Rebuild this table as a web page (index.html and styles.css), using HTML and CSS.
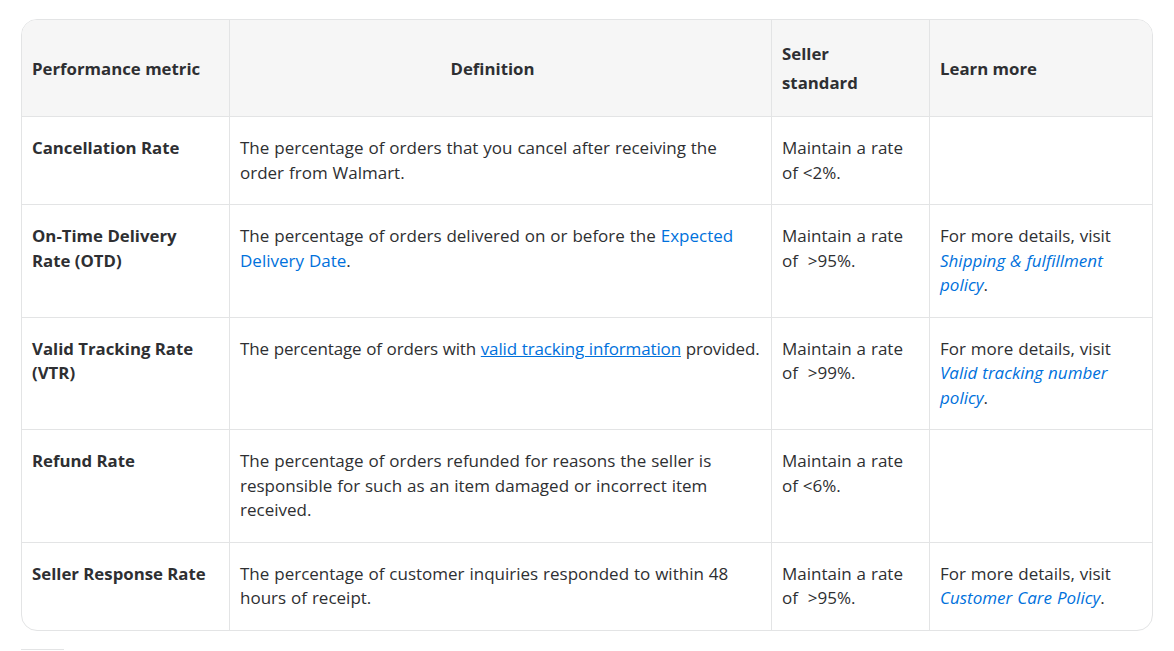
FILE: index.html
```html
<!DOCTYPE html>
<html lang="en">
<head>
<meta charset="utf-8">
<title>Seller performance standards</title>
<link rel="stylesheet" href="styles.css">
</head>
<body>
<div class="page">
  <div class="table-wrap">
    <table class="metrics">
      <colgroup>
        <col class="c1"><col class="c2"><col class="c3"><col class="c4">
      </colgroup>
      <thead>
        <tr>
          <th>Performance metric</th>
          <th class="center">Definition</th>
          <th>Seller standard</th>
          <th>Learn more</th>
        </tr>
      </thead>
      <tbody>
        <tr>
          <td class="metric">Cancellation Rate</td>
          <td>The percentage of orders that you cancel after receiving the order from Walmart.</td>
          <td>Maintain a rate of&nbsp;&lt;2%.</td>
          <td></td>
        </tr>
        <tr>
          <td class="metric">On-Time Delivery Rate (OTD)</td>
          <td>The percentage of orders delivered on or before the <a class="link" href="#">Expected Delivery Date</a>.</td>
          <td>Maintain a rate of&nbsp; &gt;95%.</td>
          <td>For more details, visit <a class="link italic" href="#">Shipping &amp; fulfillment policy</a>.</td>
        </tr>
        <tr>
          <td class="metric">Valid Tracking Rate (VTR)</td>
          <td class="tight">The percentage of orders with <a class="link underline" href="#">valid tracking information</a> provided.</td>
          <td>Maintain a rate of&nbsp; &gt;99%.</td>
          <td>For more details, visit <a class="link italic" href="#">Valid tracking number policy</a>.</td>
        </tr>
        <tr>
          <td class="metric">Refund Rate</td>
          <td>The percentage of orders refunded for reasons the seller is responsible for such as an item damaged or incorrect item received.</td>
          <td>Maintain a rate of&nbsp;&lt;6%.</td>
          <td></td>
        </tr>
        <tr>
          <td class="metric">Seller Response Rate</td>
          <td>The percentage of customer inquiries responded to within 48 hours of receipt.</td>
          <td>Maintain a rate of&nbsp; &gt;95%.</td>
          <td>For more details, visit <a class="link italic" href="#">Customer Care Policy</a>.</td>
        </tr>
      </tbody>
    </table>
  </div>
  <div class="next-rule"></div>
</div>
</body>
</html>
```
FILE: styles.css
```css
* { box-sizing: border-box; }
html, body { margin: 0; padding: 0; background: #ffffff; }
body {
  font-family: "Open Sans", Lato, "Liberation Sans", sans-serif;
  color: #2e2f32;
  font-size: 17px;
}
.page {
  padding: 19px 21px 0 21px;
}
.table-wrap {
  border: 1px solid #e3e4e5;
  border-radius: 16px;
  overflow: hidden;
}
.metrics {
  width: 100%;
  border-collapse: separate;
  border-spacing: 0;
  table-layout: fixed;
}
.c1 { width: 208px; }
.c2 { width: 542px; }
.c3 { width: 158px; }
.c4 { width: auto; }
.metrics th {
  background: #f6f6f6;
  font-weight: 700;
  font-size: 16.8px;
  text-align: left;
  vertical-align: middle;
  line-height: 29px;
  padding: 19px 26px 19px 10px;
  height: 97px;
  border-right: 1px solid #e3e4e5;
  border-bottom: 1px solid #e3e4e5;
}
.metrics th.center { text-align: center; }
.metrics td {
  vertical-align: top;
  line-height: 24.5px;
  word-spacing: 0.5px;
  padding: 19px 10px 19px 10px;
  border-right: 1px solid #e3e4e5;
  border-bottom: 1px solid #e3e4e5;
}
.metrics td.tight { letter-spacing: -0.15px; }
.metrics tr > :last-child { border-right: none; }
.metrics tbody tr:last-child td { border-bottom: none; }
.metric { font-weight: 700; }
.metrics td.metric { font-size: 16.8px; word-spacing: 0; }
.link { color: #0071dc; text-decoration: none; }
.link.italic { font-style: italic; }
.link.underline { text-decoration: underline; }
.next-rule {
  margin-top: 18px;
  width: 43px;
  border-top: 1px solid #e3e4e5;
}
```
